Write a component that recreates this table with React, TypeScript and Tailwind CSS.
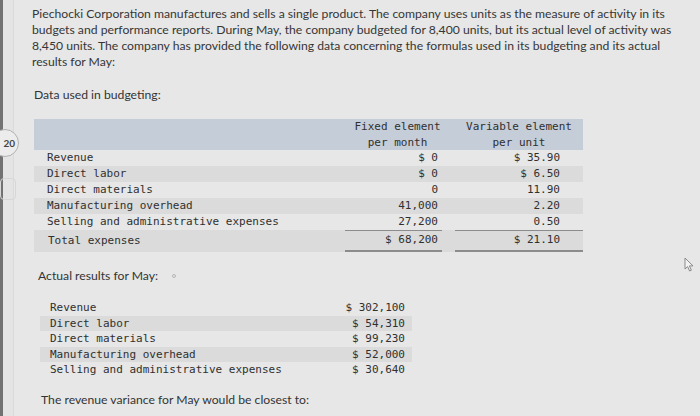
const sans = "font-['Lato','Open_Sans',sans-serif]";
const mono = "font-['DejaVu_Sans_Mono','Liberation_Mono',monospace]";

const intro = [
  'Piechocki Corporation manufactures and sells a single product. The company uses units as the measure of activity in its',
  'budgets and performance reports. During May, the company budgeted for 8,400 units, but its actual level of activity was',
  '8,450 units. The company has provided the following data concerning the formulas used in its budgeting and its actual',
  'results for May:',
];

const budget = [
  { label: 'Revenue', fixed: '$ 0', variable: '$ 35.90' },
  { label: 'Direct labor', fixed: '$ 0', variable: '$ 6.50' },
  { label: 'Direct materials', fixed: '0', variable: '11.90' },
  { label: 'Manufacturing overhead', fixed: '41,000', variable: '2.20' },
  { label: 'Selling and administrative expenses', fixed: '27,200', variable: '0.50' },
];

const actual = [
  { label: 'Revenue', value: '$ 302,100' },
  { label: 'Direct labor', value: '$ 54,310' },
  { label: 'Direct materials', value: '$ 99,230' },
  { label: 'Manufacturing overhead', value: '$ 52,000' },
  { label: 'Selling and administrative expenses', value: '$ 30,640' },
];

export default function App() {
  return (
    <div className="relative flex h-[416px] w-[700px] overflow-hidden bg-[#e6e7e6] text-[#343434]">
      <div className="w-[3px] bg-[#727272]" />
      <div className="relative w-[11px] border-r border-[#d9dad9] bg-[#e3e4e3]">
        <div className={`absolute -left-[12px] top-[129px] flex h-[28px] w-[28px] items-center justify-end rounded-full border border-[#b0b1b0] bg-[#ececec] pr-[3px] text-[10px] font-bold text-[#444] ${sans}`}>
          20
        </div>
        <div className="absolute -left-[3px] top-[178px] h-[22px] w-[16px] rounded-sm border border-[#d6d7d6]" />
      </div>

      <div className="flex-1 pl-[18px] pt-[6px]">
        <div className={`text-[12.2px] leading-[16px] text-[#363636] ${sans}`}>
          {intro.map((line) => (
            <div key={line} className="whitespace-nowrap">
              {line}
            </div>
          ))}
        </div>

        <div className={`mt-[17px] pl-[2px] text-[12.2px] leading-[16px] ${sans}`}>Data used in budgeting:</div>

        <div className={`ml-[2px] mt-[16px] w-[549px] text-[11px] text-[#303030] ${mono}`}>
          <div className="grid h-[31px] grid-cols-[309px_99px_13px_128px] bg-[#c5cdd8] leading-[15.5px]">
            <div />
            <div className="pl-[10px] text-center">
              <div>Fixed element</div>
              <div>per month</div>
            </div>
            <div />
            <div className="text-center">
              <div>Variable element</div>
              <div>per unit</div>
            </div>
          </div>
          {budget.map((row, i) => (
            <div
              key={row.label}
              className={`grid h-[16px] grid-cols-[309px_99px_13px_128px] leading-[16px] ${i % 2 === 1 ? 'bg-[#dadbda]' : ''}`}
            >
              <div className="pl-[13px]">{row.label}</div>
              <div className={`pr-[4px] text-right ${i === 4 ? 'ml-[2px] border-b border-[#8c8c8c]' : ''}`}>{row.fixed}</div>
              <div />
              <div className={`pr-[23px] text-right ${i === 4 ? 'border-b border-[#8c8c8c]' : ''}`}>{row.variable}</div>
            </div>
          ))}
          <div className="grid h-[22px] grid-cols-[309px_99px_13px_128px] items-center bg-[#dadbda]">
            <div className="pl-[14px]">Total expenses</div>
            <div className="ml-[2px] flex h-full items-center justify-end border-b-2 border-[#8c8c8c] pr-[4px]">$ 68,200</div>
            <div />
            <div className="flex h-full items-center justify-end border-b-2 border-[#8c8c8c] pr-[23px]">$ 21.10</div>
          </div>
        </div>

        <div className={`mt-[16px] flex items-center pl-[6px] text-[12.2px] leading-[16px] ${sans}`}>
          Actual results for May:
          <span className="ml-[14px] h-[4px] w-[4px] rounded-full border border-[#b5b5b5]" />
        </div>

        <div className={`ml-[8px] mt-[16px] w-[372px] text-[11px] text-[#303030] ${mono}`}>
          {actual.map((row, i) => (
            <div
              key={row.label}
              className={`flex h-[15.5px] items-center justify-between leading-[15.5px] ${i % 2 === 1 ? 'bg-[#dadbda]' : ''}`}
            >
              <span className="pl-[10px]">{row.label}</span>
              <span className="pr-[7px]">{row.value}</span>
            </div>
          ))}
        </div>

        <div className={`mt-[14px] pl-[9px] text-[12.2px] leading-[16px] ${sans}`}>
          The revenue variance for May would be closest to:
        </div>
      </div>

      <svg className="absolute left-[684px] top-[257px]" width="11" height="15" viewBox="0 0 11 15">
        <path d="M1 1 L1 12 L3.6 9.6 L5.6 14 L7.4 13.2 L5.4 8.9 L9 8.9 Z" fill="#f2f2f2" stroke="#8a8a8a" strokeWidth="1" />
      </svg>
    </div>
  );
}
